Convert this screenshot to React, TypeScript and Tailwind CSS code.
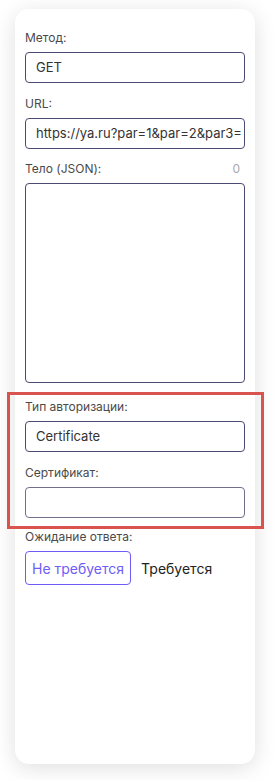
import React from 'react';

const Label = ({ children, right }: { children: React.ReactNode; right?: string }) => (
  <div className="flex justify-between items-center h-[14px] mb-[7px] text-[12px] leading-[14px] text-[#4a4a4a]">
    <span>{children}</span>
    {right !== undefined && <span className="text-[#a8a8a8] pr-[5px]">{right}</span>}
  </div>
);

const Field = ({ value, light }: { value: string; light?: boolean }) => (
  <div
    className={`h-[31px] rounded-[4px] border flex items-center px-[10px] text-[13px] text-[#333] whitespace-nowrap overflow-hidden ${
      light ? 'border-[#70708a]' : 'border-[#4b4a73]'
    }`}
  >
    {value}
  </div>
);

export default function App() {
  return (
    <div className="w-[276px] h-[780px] bg-white pt-[9px] font-['Inter',sans-serif]">
      <div className="mx-[15px] w-[240px] h-[755px] rounded-[14px] bg-white shadow-[0_4px_22px_rgba(0,0,0,0.13)] px-[10px] pt-[22px]">
        <Label>Метод:</Label>
        <Field value="GET" />

        <div className="mt-[14px]">
          <Label>URL:</Label>
          <Field value="https://ya.ru?par=1&par=2&par3=" />
        </div>

        <div className="mt-[13px]">
          <Label right="0">Тело (JSON):</Label>
          <div className="h-[200px] rounded-[4px] border border-[#4b4a73]" />
        </div>

        <div className="mt-[9px] -ml-[18px] -mr-[19px] pl-[15px] pr-[16px] pt-[5px] pb-[8px] border-[3px] border-[#d9534f]">
          <Label>Тип авторизации:</Label>
          <Field value="Certificate" />
          <div className="mt-[14px]">
            <Label>Сертификат:</Label>
            <Field value="" light />
          </div>
        </div>

        <div className="mt-[1px]">
          <Label>Ожидание ответа:</Label>
          <div className="flex items-center gap-[10px]">
            <button className="h-[34px] px-[6px] rounded-[4px] border border-[#6f5cf6] text-[14px] text-[#6f5cf6]">
              Не требуется
            </button>
            <button className="h-[34px] text-[14px] text-[#222]">Требуется</button>
          </div>
        </div>
      </div>
    </div>
  );
}
